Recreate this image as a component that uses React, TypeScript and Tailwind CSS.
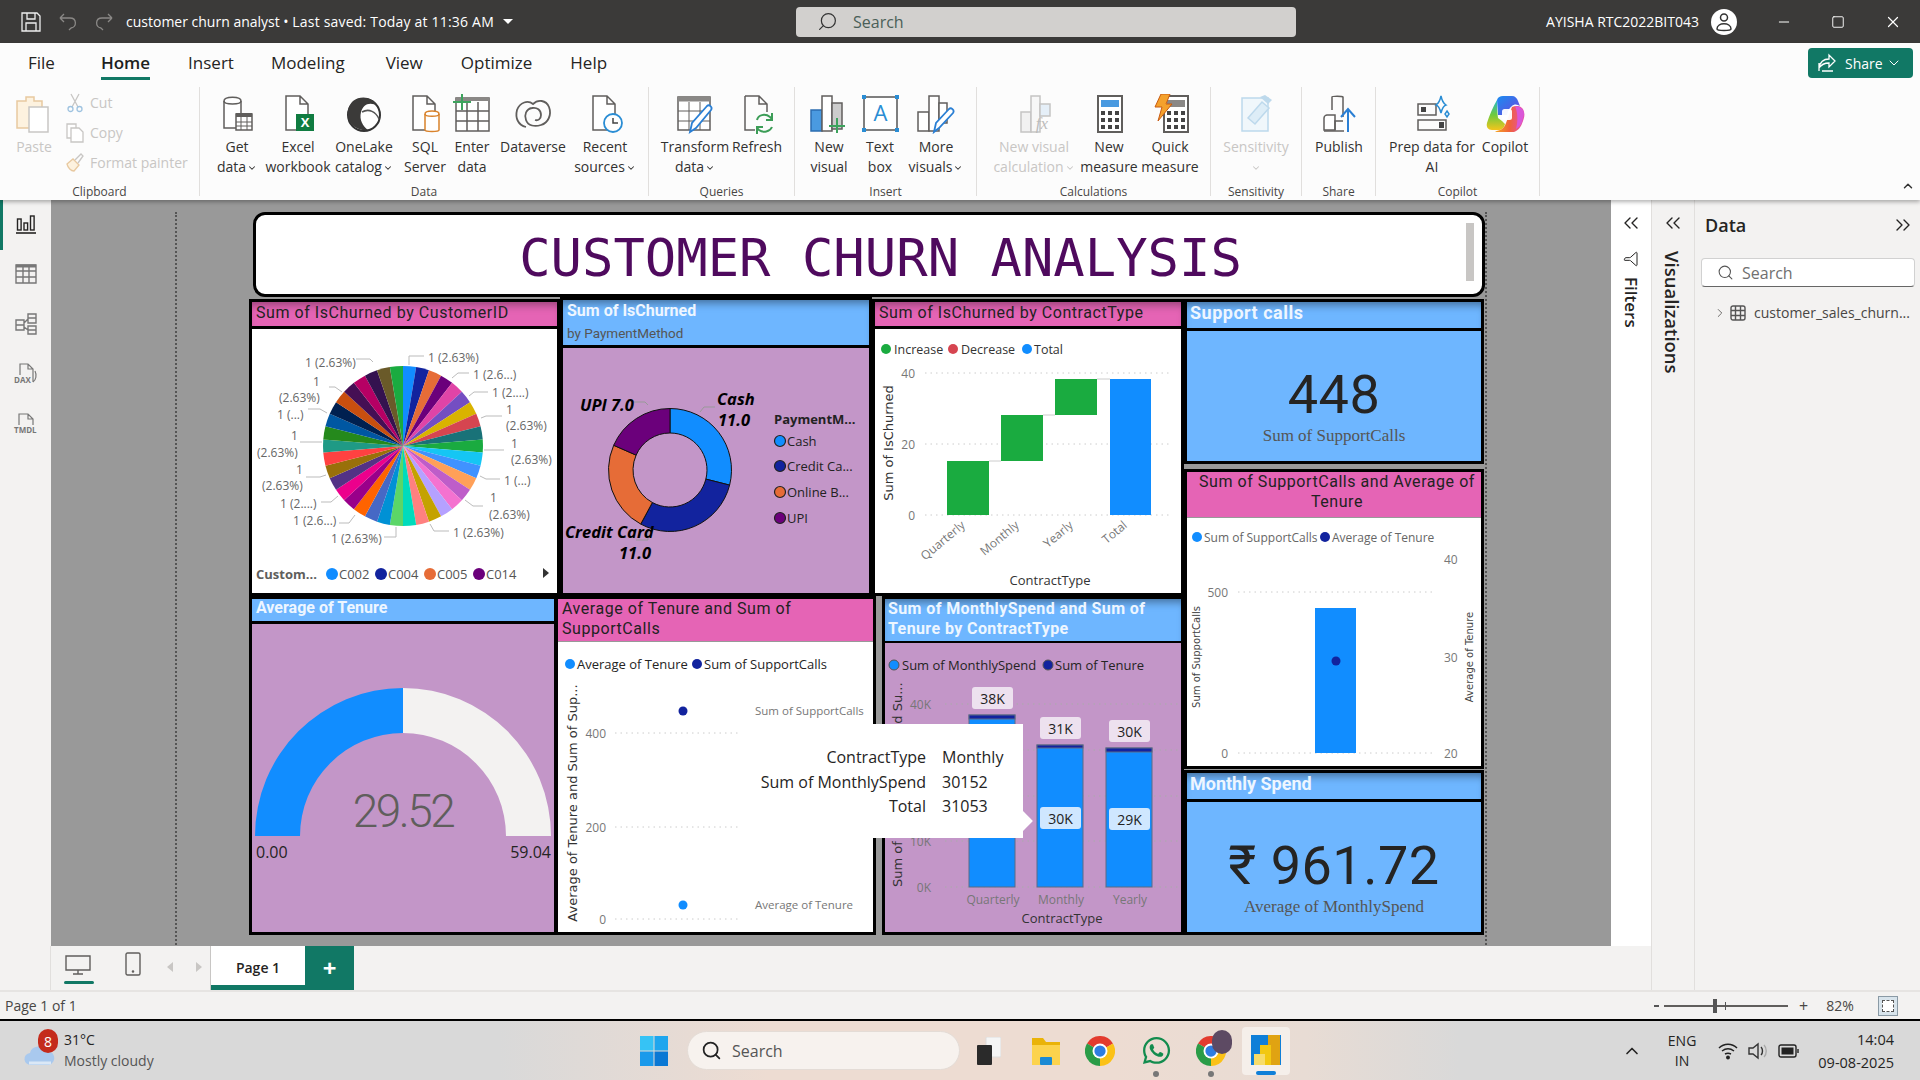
import type { ReactNode } from 'react';
import { ChevronsLeft, ChevronsRight, ChevronRight, ChevronDown, ChevronUp, Search, Funnel, Minus, Square, X } from 'lucide-react';
import { FaWhatsapp } from 'react-icons/fa';

// plain svg text helper, x/y are the middle of the text line
function T({ x, y, c, a, r, children }: { x: number; y: number; c: string; a?: 'start' | 'middle' | 'end'; r?: number; children: ReactNode }) {
  return (
    <text x={x} y={y} className={c} textAnchor={a ?? 'start'} dominantBaseline="central" transform={r ? `rotate(${r} ${x} ${y})` : undefined}>
      {children}
    </text>
  );
}

function sector(cx: number, cy: number, r0: number, r1: number, a0: number, a1: number) {
  const p = (r: number, a: number) => {
    const t = ((a - 90) * Math.PI) / 180;
    return `${(cx + r * Math.cos(t)).toFixed(2)} ${(cy + r * Math.sin(t)).toFixed(2)}`;
  };
  const large = a1 - a0 > 180 ? 1 : 0;
  if (r0 === 0) return `M${cx} ${cy} L${p(r1, a0)} A${r1} ${r1} 0 ${large} 1 ${p(r1, a1)} Z`;
  return `M${p(r1, a0)} A${r1} ${r1} 0 ${large} 1 ${p(r1, a1)} L${p(r0, a1)} A${r0} ${r0} 0 ${large} 0 ${p(r0, a0)} Z`;
}

/* ---------- ribbon icons ---------- */
const G = '#605e5c';
const Ic = ({ children, faded }: { children: ReactNode; faded?: boolean }) => (
  <svg viewBox="0 0 40 40" className={`w-10 h-10 block ${faded ? 'opacity-35' : ''}`} fill="none" stroke={G} strokeWidth="1.5">
    {children}
  </svg>
);
const Doc = () => <path d="M8 2h14l8 8v26H8z M22 2v8h8" fill="#fff" />;

const IconGetData = () => (
  <Ic>
    <path d="M7 7c0-5 17-5 17 0v27H7z" fill="#fff" />
    <path d="M7 7c0 4 17 4 17 0" />
    <rect x="19" y="20" width="16" height="16" fill="#fff" />
    <path d="M19 21h16" strokeWidth="4" />
    <path d="M24 23v13M30 23v13M19 28h16M19 32h16" strokeWidth="1" />
  </Ic>
);
const IconExcel = () => (
  <Ic>
    <Doc />
    <rect x="18" y="20" width="18" height="17" fill="#107c41" stroke="none" />
    <text x="27" y="33" textAnchor="middle" className="fill-white stroke-none text-[13px] font-bold">X</text>
  </Ic>
);
const IconOneLake = () => (
  <Ic>
    <circle cx="20" cy="21" r="16" fill="#fff" stroke="#333" strokeWidth="2" />
    <path d="M9 7c8-6 20-4 25 5-9-5-15-1-17 6-2 8 2 14 7 18-9 1-19-4-20-14C3 16 5 11 9 7z" fill="#3b3a39" stroke="none" />
    <path d="M18 18c7-4 14 0 17 7" stroke="#555" />
  </Ic>
);
const IconSql = () => (
  <Ic>
    <Doc />
    <path d="M20 20c0-4 14-4 14 0v16c0 2-14 2-14 0z" fill="#fff" stroke="#d9822b" />
    <path d="M20 20c0 3 14 3 14 0" stroke="#d9822b" />
  </Ic>
);
const IconEnter = () => (
  <Ic>
    <rect x="4" y="4" width="33" height="33" fill="#fff" />
    <path d="M4 5h33" strokeWidth="4" stroke="#8a8886" />
    <path d="M15 8v29M26 8v29M4 17h33M4 27h33" />
    <path d="M10 0v16M1 8h18" stroke="#3da35d" strokeWidth="2" />
  </Ic>
);
const IconDataverse = () => (
  <Ic>
    <path d="M13 33C5 31 2 24 4 16 7 8 15 6 20 10c5-5 13-4 16 3 3 8-1 16-8 18-6 2-13 1-15-5-2-5 0-11 6-12 5-1 9 2 9 7 0 4-3 6-6 5" strokeWidth="1.8" />
  </Ic>
);
const IconRecent = () => (
  <Ic>
    <Doc />
    <circle cx="28" cy="29" r="9" fill="#fff" stroke="#2a8dd4" strokeWidth="1.8" />
    <path d="M28 24v5h5" stroke="#444" />
  </Ic>
);
const IconTransform = () => (
  <Ic>
    <rect x="3" y="3" width="32" height="33" fill="#fff" />
    <path d="M3 5h32" strokeWidth="5" stroke="#8a8886" />
    <path d="M14 8v28M25 8v28M3 17h32M3 27h32" strokeWidth="1" />
    <path d="M15 38l2-9 15-17c2-2 6 1 4 4L21 34z" fill="#fff" stroke="#2a7fd4" strokeWidth="1.8" />
  </Ic>
);
const IconRefresh = () => (
  <Ic>
    <path d="M8 2h14l8 8v8M8 2v34h10M22 2v8h8" />
    <path d="M20 26c1-5 8-7 13-3l2 2M35 33c-2 5-9 6-13 3l-2-2" stroke="#3c9d57" strokeWidth="2" />
    <path d="M35 19v7h-6M20 40v-7h6" stroke="#3c9d57" strokeWidth="2" />
  </Ic>
);
const IconNewVisual = () => (
  <Ic>
    <rect x="2" y="16" width="11" height="21" fill="#4a9ae0" stroke="#2b6cb0" />
    <rect x="13" y="2" width="10" height="35" fill="#fff" />
    <rect x="23" y="9" width="10" height="26" fill="#ccc" />
    <path d="M28 24v15M20 32h16" stroke="#3da35d" strokeWidth="2" />
  </Ic>
);
const IconTextBox = () => (
  <Ic>
    <rect x="4" y="3" width="33" height="33" fill="#fff" stroke="#555" />
    <text x="20.5" y="27" textAnchor="middle" className="fill-[#2a8dd4] stroke-none text-[22px]">A</text>
    <g fill="#2a8dd4" stroke="none">
      <rect x="2" y="1" width="4" height="4" /><rect x="35" y="1" width="4" height="4" /><rect x="2" y="34" width="4" height="4" /><rect x="35" y="34" width="4" height="4" />
    </g>
  </Ic>
);
const IconMore = () => (
  <Ic>
    <rect x="2" y="18" width="11" height="19" fill="#fff" />
    <rect x="13" y="2" width="10" height="35" fill="#fff" />
    <rect x="23" y="9" width="8" height="20" fill="#fff" />
    <path d="M18 38l2-9 13-14c2-2 6 1 4 4L23 34z" fill="#fff" stroke="#2a7fd4" strokeWidth="1.8" />
  </Ic>
);
const IconCalc = () => (
  <Ic faded>
    <rect x="7" y="18" width="10" height="20" fill="#ddd" />
    <rect x="17" y="2" width="9" height="36" fill="#eee" />
    <rect x="26" y="10" width="10" height="12" fill="#bcd9f2" />
    <text x="28" y="35" textAnchor="middle" className="fill-[#444] stroke-none text-[17px] italic font-['Liberation_Serif',serif]">fx</text>
  </Ic>
);
const Calculator = ({ blue }: { blue?: boolean }) => (
  <>
    <rect x="9" y="2" width="24" height="36" fill="#fff" strokeWidth="2" />
    <rect x="12" y="6" width="18" height="7" fill={blue ? '#4a9ae0' : '#8a8886'} stroke="none" />
    <g fill="#444" stroke="none">
      <rect x="12" y="17" width="4" height="4" /><rect x="19" y="17" width="4" height="4" /><rect x="26" y="17" width="4" height="4" />
      <rect x="12" y="24" width="4" height="4" /><rect x="19" y="24" width="4" height="4" /><rect x="26" y="24" width="4" height="4" />
      <rect x="12" y="31" width="4" height="4" /><rect x="19" y="31" width="4" height="4" /><rect x="26" y="31" width="4" height="4" />
    </g>
  </>
);
const IconMeasure = () => (
  <Ic>
    <Calculator blue />
  </Ic>
);
const IconQuick = () => (
  <Ic>
    <g transform="translate(5 0)">
      <Calculator />
    </g>
    <path d="M11 0h9l-4 10h6L8 27l4-14H5z" fill="#f4a12c" stroke="#c85a11" strokeWidth="1" />
  </Ic>
);
const IconSensitivity = () => (
  <Ic faded>
    <path d="M6 4h26v33H6z" fill="#dbeefb" stroke="#4a9ad0" />
    <path d="M12 24L26 8l7 6-14 16z" fill="#a6d2ee" stroke="#4a9ad0" />
    <path d="M24 3l8 7 4-4-7-5z" fill="#4a9ad0" stroke="none" />
  </Ic>
);
const IconPublish = () => (
  <Ic>
    <path d="M13 16V3c0-1 10-1 11 0v20" />
    <path d="M5 36V24c0-2 2-3 3-3h8v15z" fill="#fff" />
    <path d="M16 36V27h8" />
    <path d="M29 38V15M22 23l7-8 7 8" stroke="#2a7fd4" strokeWidth="2" />
    <path d="M5 37h20" />
  </Ic>
);
const IconPrep = () => (
  <Ic>
    <rect x="6" y="10" width="18" height="11" />
    <rect x="9" y="13" width="5" height="5" fill="#444" stroke="none" />
    <rect x="6" y="26" width="28" height="10" />
    <rect x="27" y="28" width="5" height="6" fill="#444" stroke="none" />
    <path d="M29 2c1 5 2 7 5 9-3 1-4 4-5 8-1-4-2-7-5-8 3-2 4-4 5-9z" stroke="#2a8dd4" />
    <path d="M35 17l2 3-2 3-2-3z" stroke="#2a8dd4" />
  </Ic>
);
const IconCopilot = () => (
  <svg viewBox="0 0 40 40" className="w-10 h-10 block">
    <defs>
      <linearGradient id="cpA" x1="0" y1="0" x2="1" y2="1">
        <stop offset="0" stopColor="#1a8cf0" /><stop offset="0.6" stopColor="#4a63e6" /><stop offset="1" stopColor="#a44fd8" />
      </linearGradient>
      <linearGradient id="cpB" x1="0" y1="0" x2="0" y2="1">
        <stop offset="0" stopColor="#26b8c8" /><stop offset="0.5" stopColor="#6fca3c" /><stop offset="1" stopColor="#f4c51c" />
      </linearGradient>
      <linearGradient id="cpC" x1="0" y1="0" x2="1" y2="0">
        <stop offset="0" stopColor="#f5a623" /><stop offset="0.5" stopColor="#f0623a" /><stop offset="1" stopColor="#e64fb4" />
      </linearGradient>
    </defs>
    <path d="M12 6c1-3 3-4 6-4h9c3 0 5 2 6 5l2 5c-3-2-6-2-8 0-3 2-4 5-5 9H13z" fill="url(#cpA)" />
    <path d="M12 6C8 13 4 22 2 29c-1 4 1 7 5 7h6c4 0 6-2 7-6l-3-3-4-3c-1-6-1-13-1-18z" fill="url(#cpB)" />
    <path d="M27 13c5-2 11-1 12 5 1 3 0 6-1 9-2 6-4 9-9 11H14c-2 0-3 0-4-1 5 0 9-2 11-8z" fill="url(#cpC)" />
    <path d="M30 12c5 0 9 3 9 8l-2 8c-1 3-3 5-6 7 2-7 2-16-1-23z" fill="#d957d8" />
    <rect x="17" y="15" width="10" height="11" rx="2.5" fill="#fff" opacity="0.95" />
  </svg>
);

/* ---------- ribbon ---------- */
function Btn({ w, icon, l1, l2, caret, faded }: { w: string; icon: ReactNode; l1: string; l2?: string; caret?: boolean; faded?: boolean }) {
  return (
    <div className={`${w} shrink-0 flex flex-col items-center pt-[7px] text-[14px] leading-[20px] whitespace-nowrap ${faded ? 'text-[#c8c6c4]' : 'text-[#323130]'}`}>
      <div className="h-10 w-10 mb-[3px]">{icon}</div>
      <span>{l1}</span>
      <span className="flex items-center gap-px h-5">
        {l2}
        {caret && <ChevronDown className="w-[10px] h-[10px] mt-[2px]" strokeWidth={2.5} />}
      </span>
    </div>
  );
}

function Group({ w, label, pad, children }: { w: string; label: string; pad?: string; children: ReactNode }) {
  return (
    <div className={`${w} shrink-0 h-full flex flex-col border-r border-[#e1dfdd]`}>
      <div className={`flex-1 flex ${pad ?? ''}`}>{children}</div>
      <div className="h-[16px] -mb-[4px] text-center text-[12px] leading-[16px] text-[#484644]">{label}</div>
    </div>
  );
}

function Ribbon() {
  return (
    <div className="relative z-10 h-[157px] bg-[#fcfcfc] shadow-[0_2px_4px_rgba(0,0,0,0.3)]">
      <div className="h-[44px] flex items-start relative text-[17px] text-[#252423]">
        <span className="ml-[28px] mt-[7px]">File</span>
        <span className="ml-[46px] h-[37px] pt-[7px] border-b-[3px] border-[#117865] font-semibold text-[#201f1e]">Home</span>
        <span className="ml-[38px] mt-[7px]">Insert</span>
        <span className="ml-[37px] mt-[7px]">Modeling</span>
        <span className="ml-[41px] mt-[7px]">View</span>
        <span className="ml-[38px] mt-[7px]">Optimize</span>
        <span className="ml-[38px] mt-[7px]">Help</span>
        <div className="absolute left-[1808px] top-[5px] w-[105px] h-[30px] rounded bg-[#117865] text-white text-[14px] flex items-center pl-[8px] gap-[9px]">
          <svg viewBox="0 0 20 20" className="w-5 h-5" fill="none" stroke="#fff" strokeWidth="1.3">
            <path d="M6 18h11M3 18v-8M3 15c1-6 5-9 10-9V2l6 6-6 6v-4c-5 0-8 2-10 5z" />
          </svg>
          Share
          <ChevronDown className="w-4 h-4 -ml-[6px]" strokeWidth={1.5} />
        </div>
      </div>
      <div className="h-[109px] flex">
        <Group w="w-[200px]" label="Clipboard">
          <div className="w-[68px] pt-[7px] flex flex-col items-center text-[14px] leading-[20px] text-[#c8c6c4]">
            <svg viewBox="0 0 40 40" className="w-10 h-10 mb-[3px]" fill="none">
              <path d="M3 7h9V3h8v4h8v27H3z" fill="#fdf2df" stroke="#e8c9a0" strokeWidth="1.5" />
              <rect x="15" y="13" width="19" height="25" fill="#fff" stroke="#c8c6c4" strokeWidth="1.5" />
            </svg>
            Paste
          </div>
          <div className="flex flex-col text-[14px] text-[#c8c6c4] leading-[30px] pt-[1px] -ml-[2px]">
            <span className="flex items-center gap-[6px]">
              <svg viewBox="0 0 18 20" className="w-[18px] h-[20px]" fill="none" stroke="#c8c6c4" strokeWidth="1.3">
                <path d="M5 1l7 13M13 1L6 14" /><circle cx="4.5" cy="16" r="2.5" stroke="#9fc3e0" /><circle cx="13.5" cy="16" r="2.5" stroke="#9fc3e0" />
              </svg>
              Cut
            </span>
            <span className="flex items-center gap-[6px]">
              <svg viewBox="0 0 18 20" className="w-[18px] h-[20px]" fill="#fff" stroke="#c8c6c4" strokeWidth="1.3">
                <path d="M1 1h9v14H1z" /><path d="M5 5h8l4 4v10H5z" />
              </svg>
              Copy
            </span>
            <span className="flex items-center gap-[6px] whitespace-nowrap">
              <svg viewBox="0 0 18 20" className="w-[18px] h-[20px]" fill="none" stroke="#e8c9a0" strokeWidth="1.3">
                <path d="M1 11l6-5 6 6-5 6c-3 0-6-3-7-7z" fill="#fdf2df" /><path d="M9 7l6-6 2 2-5 7" stroke="#c8c6c4" />
              </svg>
              Format painter
            </span>
          </div>
        </Group>
        <Group w="w-[449px]" label="Data" pad="pl-[6px]">
          <Btn w="w-[62px]" icon={<IconGetData />} l1="Get" l2="data" caret />
          <Btn w="w-[60px]" icon={<IconExcel />} l1="Excel" l2="workbook" />
          <Btn w="w-[72px]" icon={<IconOneLake />} l1="OneLake" l2="catalog" caret />
          <Btn w="w-[50px]" icon={<IconSql />} l1="SQL" l2="Server" />
          <Btn w="w-[44px]" icon={<IconEnter />} l1="Enter" l2="data" />
          <Btn w="w-[78px]" icon={<IconDataverse />} l1="Dataverse" />
          <Btn w="w-[66px]" icon={<IconRecent />} l1="Recent" l2="sources" caret />
        </Group>
        <Group w="w-[146px]" label="Queries" pad="pl-[4px]">
          <Btn w="w-[84px]" icon={<IconTransform />} l1="Transform" l2="data" caret />
          <Btn w="w-[40px]" icon={<IconRefresh />} l1="Refresh" />
        </Group>
        <Group w="w-[182px]" label="Insert" pad="pl-[5px]">
          <Btn w="w-[58px]" icon={<IconNewVisual />} l1="New" l2="visual" />
          <Btn w="w-[44px]" icon={<IconTextBox />} l1="Text" l2="box" />
          <Btn w="w-[68px]" icon={<IconMore />} l1="More" l2="visuals" caret />
        </Group>
        <Group w="w-[234px]" label="Calculations" pad="pl-[7px]">
          <Btn w="w-[100px]" icon={<IconCalc />} l1="New visual" l2="calculation" caret faded />
          <Btn w="w-[50px]" icon={<IconMeasure />} l1="New" l2="measure" />
          <Btn w="w-[72px]" icon={<IconQuick />} l1="Quick" l2="measure" />
        </Group>
        <Group w="w-[91px]" label="Sensitivity">
          <Btn w="w-[90px]" icon={<IconSensitivity />} l1="Sensitivity" caret faded />
        </Group>
        <Group w="w-[74px]" label="Share">
          <Btn w="w-[74px]" icon={<IconPublish />} l1="Publish" />
        </Group>
        <Group w="w-[164px]" label="Copilot" pad="pl-[8px]">
          <Btn w="w-[96px]" icon={<IconPrep />} l1="Prep data for" l2="AI" />
          <Btn w="w-[50px]" icon={<IconCopilot />} l1="Copilot" />
        </Group>
        <div className="flex-1 flex justify-end items-end pr-[5px] pb-[3px]">
          <ChevronUp className="w-[14px] h-[14px] text-[#333]" strokeWidth={2.5} />
        </div>
      </div>
    </div>
  );
}

/* ---------- report visuals ---------- */
const PINK = 'bg-[#e564b5] text-[#222] font-["Roboto",sans-serif] text-[16px] tracking-[0.55px]';
const PINK_SHADE = `${PINK} shadow-[inset_0_8px_8px_-5px_rgba(0,0,0,0.35)]`;
const BLUE_FLAT = 'bg-[#6eb6ff] text-[#eef6ff] font-["Roboto",sans-serif] font-bold text-[16px]';
const BLUE = `${BLUE_FLAT} shadow-[inset_0_8px_8px_-5px_rgba(0,0,0,0.4)]`;
const PLUM = 'bg-[#c396c8]';

function Visual({ size, head, headClass, body, children }: { size: string; head: ReactNode; headClass: string; body: string; children: ReactNode }) {
  return (
    <section className={`${size} shrink-0 flex flex-col border-[3px] border-black`}>
      <div className={headClass}>{head}</div>
      <div className={`flex-1 min-h-0 ${body}`}>{children}</div>
    </section>
  );
}

const SLICES = ['#118DFF', '#12239E', '#E66C37', '#6B007B', '#E044A7', '#744EC2', '#D9B300', '#D64550', '#197278', '#1AAB40', '#15C6F4', '#4092FF', '#FFA058', '#BE5DC9', '#F472D0', '#B5A1FF', '#C4A200', '#FF8080', '#00DBBC', '#5BD667', '#0091D5', '#4668C5', '#FF6300', '#99008A', '#EC008C', '#533285', '#99700A', '#FF4141', '#1F9A85', '#25891C', '#0057A2', '#002050', '#C94F0F', '#450F54', '#B60064', '#34124F', '#6A5A29', '#1AAB40'];

const LBL = 'fill-[#666] text-[12px]';
const PIE_TEXT: [number, number, string][] = [
  [428, 357, '1 (2.63%)'], [473, 374, '1 (2.6...)'], [492, 392, '1 (2....)'], [506, 409, '1'], [506, 425, '(2.63%)'],
  [511, 443, '1'], [511, 459, '(2.63%)'], [504, 480, '1 (...)'], [490, 497, '1'], [489, 514, '(2.63%)'],
  [453, 532, '1 (2.63%)'], [331, 538, '1 (2.63%)'], [293, 520, '1 (2.6...)'], [280, 503, '1 (2....)'], [296, 469, '1'], [262, 485, '(2.63%)'],
  [291, 435, '1'], [257, 452, '(2.63%)'], [277, 414, '1 (...)'], [313, 381, '1'], [279, 397, '(2.63%)'], [305, 362, '1 (2.63%)'],
];
const PIE_LEADERS = [
  'M409 365v-9h15', 'M452 378l6-5h11', 'M469 396l5-4h14', 'M481 418l5-2h16', 'M484 450h20', 'M480 476l6 3h14', 'M465 500l8 6h10',
  'M430 524l4 7h15', 'M396 527v10h-12', 'M355 515l-6 8h-10', 'M338 496l-7 6h-10', 'M326 475l-6 2h-14', 'M322 442h-22', 'M327 413l-7-4h-12', 'M342 392l-7-5h-6', 'M373 362l-3-3h-14',
];

function PieChart() {
  const step = 360 / SLICES.length;
  return (
    <svg viewBox="252 329 305 264" className="block w-full h-full">
      {SLICES.map((c, i) => (
        <path key={i} d={sector(403, 446, 0, 80, i * step, (i + 1) * step)} fill={c} />
      ))}
      <g fill="none" stroke="#bbb" strokeWidth="1">
        {PIE_LEADERS.map((d) => (
          <path key={d} d={d} />
        ))}
      </g>
      {PIE_TEXT.map(([x, y, s], i) => (
        <T key={i} x={x} y={y} c={LBL}>{s}</T>
      ))}
      <T x={256} y={574} c="fill-[#605e5c] text-[13px] font-bold">Custom...</T>
      {[['C002', 332, '#118DFF'], ['C004', 381, '#12239E'], ['C005', 430, '#E66C37'], ['C014', 479, '#6B007B']].map(([s, x, c]) => (
        <g key={s as string}>
          <circle cx={x as number} cy={574} r={6} fill={c as string} />
          <T x={(x as number) + 7} y={574} c="fill-[#555] text-[13px]">{s}</T>
        </g>
      ))}
      <path d="M543 568l6 5-6 5z" fill="#333" />
    </svg>
  );
}

function DonutChart() {
  const vals = [['#118DFF', 11], ['#12239E', 11], ['#E66C37', 9], ['#6B007B', 7]] as const;
  let at = 0;
  const B = 'fill-black text-[16.5px] font-bold italic';
  return (
    <svg viewBox="563 348 306 245" className="block w-full h-full">
      {vals.map(([c, v]) => {
        const a0 = at;
        at += (v / 38) * 360;
        return <path key={c} d={sector(670, 470, 37, 61.5, a0, at)} fill={c} stroke="#111" strokeWidth="1" />;
      })}
      <path d="M648 405l-3-3h-11M700 412l4-5h11M648 530v10h-12" fill="none" stroke="#999" />
      <T x={580} y={404} c={B}>UPI 7.0</T>
      <T x={717} y={398} c={B}>Cash</T>
      <T x={718} y={419} c={B}>11.0</T>
      <T x={565} y={531} c={B}>Credit Card</T>
      <T x={619} y={552} c={B}>11.0</T>
      <T x={774} y={419} c="fill-[#222] text-[13px] font-bold">PaymentM...</T>
      {[['Cash', 441, '#118DFF'], ['Credit Ca...', 466, '#12239E'], ['Online B...', 492, '#E66C37'], ['UPI', 518, '#6B007B']].map(([s, y, c]) => (
        <g key={s as string}>
          <circle cx={780} cy={y as number} r={5.5} fill={c as string} stroke="#222" strokeWidth="1.2" />
          <T x={787} y={y as number} c="fill-[#222] text-[13px]">{s}</T>
        </g>
      ))}
    </svg>
  );
}

const GRID = { stroke: '#ccc', strokeDasharray: '1.5 4', strokeWidth: 1 };
const AX = "fill-[#333] text-[13px] font-['DejaVu_Sans',sans-serif]";

function Waterfall() {
  return (
    <svg viewBox="875 329 306 264" className="block w-full h-full">
      {[['40', 373], ['20', 444], ['0', 515]].map(([s, y]) => (
        <g key={s as string}>
          <line x1={925} x2={1172} y1={y as number} y2={y as number} {...GRID} />
          <T x={915} y={y as number} a="end" c="fill-[#777] text-[12px]">{s}</T>
        </g>
      ))}
      <path d="M989 461h12M1043 415h12M1097 379h13" stroke="#ccc" />
      <rect x={947} y={461} width={42} height={54} fill="#1aab40" />
      <rect x={1001} y={415} width={42} height={46} fill="#1aab40" />
      <rect x={1055} y={379} width={42} height={36} fill="#1aab40" />
      <rect x={1110} y={379} width={41} height={136} fill="#118dff" />
      {[['#1aab40', 886, 'Increase', 894], ['#d64550', 953, 'Decrease', 961], ['#118dff', 1027, 'Total', 1034]].map(([c, x, s, tx]) => (
        <g key={s as string}>
          <circle cx={x as number} cy={349} r={5} fill={c as string} />
          <T x={tx as number} y={349} c="fill-[#333] text-[12.5px]">{s}</T>
        </g>
      ))}
      <T x={888} y={443} a="middle" r={-90} c={AX}>Sum of IsChurned</T>
      <T x={963} y={523} a="end" r={-40} c="fill-[#777] text-[12px]">Quarterly</T>
      <T x={1017} y={523} a="end" r={-40} c="fill-[#777] text-[12px]">Monthly</T>
      <T x={1071} y={523} a="end" r={-40} c="fill-[#777] text-[12px]">Yearly</T>
      <T x={1125} y={523} a="end" r={-40} c="fill-[#777] text-[12px]">Total</T>
      <T x={1050} y={580} a="middle" c="fill-[#333] text-[13px] font-medium">ContractType</T>
    </svg>
  );
}

function ComboSingle() {
  return (
    <svg viewBox="1187 518 294 248" className="block w-full h-full">
      <circle cx={1197} cy={537} r={5} fill="#118dff" />
      <T x={1204} y={537} c="fill-[#666] text-[12px]">Sum of SupportCalls</T>
      <circle cx={1325} cy={537} r={5} fill="#12239e" />
      <T x={1332} y={537} c="fill-[#666] text-[12px]">Average of Tenure</T>
      <line x1={1238} x2={1435} y1={592} y2={592} {...GRID} />
      <line x1={1238} x2={1435} y1={753} y2={753} {...GRID} />
      <T x={1228} y={592} a="end" c="fill-[#777] text-[12px]">500</T>
      <T x={1228} y={753} a="end" c="fill-[#777] text-[12px]">0</T>
      <T x={1444} y={559} c="fill-[#777] text-[12px]">40</T>
      <T x={1444} y={657} c="fill-[#777] text-[12px]">30</T>
      <T x={1444} y={753} c="fill-[#777] text-[12px]">20</T>
      <rect x={1315} y={608} width={41} height={145} fill="#118dff" />
      <circle cx={1336} cy={661} r={4.5} fill="#12239e" />
      <T x={1196} y={657} a="middle" r={-90} c="fill-[#444] text-[10px] font-['DejaVu_Sans',sans-serif]">Sum of SupportCalls</T>
      <T x={1469} y={657} a="middle" r={-90} c="fill-[#444] text-[10px] font-['DejaVu_Sans',sans-serif]">Average of Tenure</T>
    </svg>
  );
}

function Gauge() {
  return (
    <svg viewBox="252 624 302 308" className="block w-full h-full">
      <path d={sector(403, 836, 103, 148, -90, 0)} fill="#118dff" />
      <path d={sector(403, 836, 103, 148, 0, 90)} fill="#f3f2f1" />
      <T x={403} y={811} a="middle" c="fill-[#605e5c] text-[46px] font-light font-['Roboto',sans-serif] tracking-[-2.5px]">29.52</T>
      <T x={256} y={852} c="fill-[#252423] text-[16px]">0.00</T>
      <T x={551} y={852} a="end" c="fill-[#252423] text-[16px]">59.04</T>
    </svg>
  );
}

function Scatter() {
  return (
    <svg viewBox="558 642 315 290" className="block w-full h-full">
      <circle cx={570} cy={664} r={5} fill="#118dff" />
      <T x={577} y={664} c="fill-[#252423] text-[13px]">Average of Tenure</T>
      <circle cx={697} cy={664} r={5} fill="#12239e" />
      <T x={704} y={664} c="fill-[#252423] text-[13px]">Sum of SupportCalls</T>
      {[['400', 733], ['200', 827], ['0', 919]].map(([s, y]) => (
        <g key={s as string}>
          <line x1={615} x2={738} y1={y as number} y2={y as number} {...GRID} />
          <T x={606} y={y as number} a="end" c="fill-[#777] text-[12px]">{s}</T>
        </g>
      ))}
      <circle cx={683} cy={711} r={4.5} fill="#12239e" />
      <circle cx={683} cy={905} r={4.5} fill="#118dff" />
      <T x={755} y={710} c="fill-[#777] text-[11.5px]">Sum of SupportCalls</T>
      <T x={755} y={904} c="fill-[#777] text-[11.5px]">Average of Tenure</T>
      <T x={572} y={803} a="middle" r={-90} c={AX}>Average of Tenure and Sum of Sup...</T>
    </svg>
  );
}

function Stacked() {
  const bars = [
    { x: 969, top: 715, mid: 719, l1: '38K', y1: 687, l2: null, y2: 0, name: 'Quarterly' },
    { x: 1037, top: 745, mid: 748, l1: '31K', y1: 717, l2: '30K', y2: 807, name: 'Monthly' },
    { x: 1106, top: 748, mid: 752, l1: '30K', y1: 720, l2: '29K', y2: 808, name: 'Yearly' },
  ];
  return (
    <svg viewBox="885 643 296 289" className="block w-full h-full">
      <circle cx={894} cy={665} r={5} fill="#118dff" stroke="#555" />
      <T x={902} y={665} c="fill-[#252423] text-[13px]">Sum of MonthlySpend</T>
      <circle cx={1048} cy={665} r={5} fill="#12239e" stroke="#555" />
      <T x={1055} y={665} c="fill-[#252423] text-[13px]">Sum of Tenure</T>
      {[['40K', 704], ['30K', 750], ['20K', 796], ['10K', 841], ['0K', 887]].map(([s, y]) => (
        <g key={s as string}>
          <line x1={945} x2={1178} y1={y as number} y2={y as number} stroke="#aaa" strokeDasharray="1.5 4" />
          <T x={931} y={y as number} a="end" c="fill-[#777] text-[12px]">{s}</T>
        </g>
      ))}
      {bars.map((b) => (
        <g key={b.name}>
          <rect x={b.x} y={b.top} width={46} height={887 - b.top} fill="#118dff" stroke="#5c6a85" />
          <rect x={b.x} y={b.top} width={46} height={b.mid - b.top} fill="#12239e" stroke="#5c6a85" />
          <rect x={b.x + 3} y={b.y1} width={41} height={22} rx={3} fill="#ede1ef" />
          <T x={b.x + 23.5} y={b.y1 + 11} a="middle" c="fill-[#222] text-[14px]">{b.l1}</T>
          {b.l2 && (
            <>
              <rect x={b.x + 3} y={b.y2} width={41} height={22} rx={3} fill="#cfe7ff" />
              <T x={b.x + 23.5} y={b.y2 + 11} a="middle" c="fill-[#222] text-[14px]">{b.l2}</T>
            </>
          )}
          <T x={b.x + 24} y={899} a="middle" c="fill-[#777] text-[12px]">{b.name}</T>
        </g>
      ))}
      <T x={1062} y={918} a="middle" c="fill-[#333] text-[13px] font-medium">ContractType</T>
      <T x={897} y={887} r={-90} c={AX}>Sum of MonthlySpend and Su...</T>
    </svg>
  );
}

function Card({ value, label }: { value: string; label: string }) {
  return (
    <div className="h-full bg-[#6eb6ff] flex flex-col items-center pt-[32px]">
      <div className="text-[54px] leading-[64px] text-[#252423] font-['Roboto',sans-serif] tracking-[0.5px]">{value}</div>
      <div className="text-[17px] leading-[24px] text-[#555] font-['Liberation_Serif',serif] -mt-[3px]">{label}</div>
    </div>
  );
}

function Report() {
  return (
    <div className="h-[737px] w-[1312px] ml-[124px] border-x-2 border-b-2 border-dotted border-[#555] pl-[72px]">
      <div className="mt-[12px] ml-[4px] w-[1232px] h-[85px] border-[3px] border-black rounded-xl bg-white flex items-center justify-center relative text-[52.2px] text-[#4f0a5e] font-['DejaVu_Sans_Mono',monospace] pl-[23px] pt-[7px]">
        CUSTOMER CHURN ANALYSIS
        <div className="absolute right-[8px] top-[8px] w-[8px] h-[58px] bg-[#c8c6c4]" />
      </div>
      <div className="mt-[2px] flex relative">
        <div className="w-[935px] shrink-0">
          <div className="flex h-[297px]">
            <Visual size="w-[311px] h-[297px]" head="Sum of IsChurned by CustomerID" headClass={`h-[27px] border-b-[3px] border-black pl-[4px] leading-[22px] ${PINK_SHADE}`} body="bg-white">
              <PieChart />
            </Visual>
            <Visual
              size="w-[312px] h-[299px] -mt-[2px]"
              head={
                <>
                  <div className="h-[24px] pl-[4px] leading-[22px]">Sum of IsChurned</div>
                  <div className="text-[13.5px] pl-[4px] leading-[18px] font-normal text-[#555]">by PaymentMethod</div>
                </>
              }
              headClass={`h-[48px] border-b-[3px] border-black ${BLUE}`}
              body={PLUM}
            >
              <DonutChart />
            </Visual>
            <Visual size="w-[312px] h-[297px]" head="Sum of IsChurned by ContractType" headClass={`h-[27px] border-b-[3px] border-black pl-[4px] leading-[22px] ${PINK_SHADE}`} body="bg-white">
              <Waterfall />
            </Visual>
          </div>
          <div className="flex h-[339px]">
            <Visual size="w-[308px] h-[339px]" head="Average of Tenure" headClass={`h-[25px] border-b-[3px] border-black pl-[4px] leading-[17px] ${BLUE_FLAT}`} body={PLUM}>
              <Gauge />
            </Visual>
            <Visual size="w-[321px] h-[339px] -ml-[2px]" head="Average of Tenure and Sum of SupportCalls" headClass={`h-[43px] border-b border-[#999] pl-[4px] pr-[12px] leading-[20px] ${PINK}`} body="bg-white">
              <Scatter />
            </Visual>
            <Visual size="w-[302px] h-[339px] ml-[6px]" head="Sum of MonthlySpend and Sum of Tenure by ContractType" headClass={`h-[44px] border-b-2 border-black pl-[3px] pr-[30px] leading-[20px] tracking-[0.4px] ${BLUE}`} body={PLUM}>
              <Stacked />
            </Visual>
          </div>
        </div>
        <div className="w-[300px] shrink-0">
          <Visual size="w-[300px] h-[165px]" head="Support calls" headClass={`h-[29px] border-b-[3px] border-black pl-[3px] leading-[22px] ${BLUE} text-[18px] tracking-[0.5px]`} body="">
            <Card value="448" label="Sum of SupportCalls" />
          </Visual>
          <div className="mt-[5px]">
            <Visual size="w-[300px] h-[300px]" head="Sum of SupportCalls and Average of Tenure" headClass={`h-[46px] border-b border-[#999] pl-[10px] pr-[4px] leading-[20px] text-center ${PINK}`} body="bg-white">
              <ComboSingle />
            </Visual>
          </div>
          <div className="mt-[1px]">
            <Visual size="w-[300px] h-[165px]" head="Monthly Spend" headClass={`h-[29px] border-b-[3px] border-black pl-[3px] leading-[22px] ${BLUE} text-[18px]`} body="">
              <Card value="₹ 961.72" label="Average of MonthlySpend" />
            </Visual>
          </div>
        </div>
        {/* hover tooltip over the charts */}
        <div className="absolute left-[491px] top-[425px] w-[283px] h-[114px] bg-white text-[16px] text-[#252423] pt-[21px]">
          <div className="grid grid-cols-[186px_auto] gap-x-4 leading-[24.5px]">
            <span className="text-right">ContractType</span><span>Monthly</span>
            <span className="text-right">Sum of MonthlySpend</span><span>30152</span>
            <span className="text-right">Total</span><span>31053</span>
          </div>
          <div className="absolute -right-[7px] top-[90px] w-[14px] h-[14px] rotate-45 bg-white" />
        </div>
      </div>
    </div>
  );
}

/* ---------- side rail ---------- */
function Rail() {
  const s = 'w-[22px] h-[22px] block';
  return (
    <div className="w-[51px] shrink-0 bg-[#f3f2f1] relative flex flex-col items-center pt-[13px] gap-[28px]">
      <div className="absolute left-0 top-0 w-[3px] h-[50px] bg-[#117865]" />
      <svg viewBox="0 0 22 22" className={s} fill="none" stroke="#252423" strokeWidth="1.4">
        <rect x="2.5" y="6" width="3.6" height="11" /><rect x="9" y="10" width="3.6" height="7" /><rect x="15.5" y="3" width="3.6" height="14" />
        <path d="M1 20h20" strokeWidth="1.6" />
      </svg>
      <svg viewBox="0 0 22 22" className={s} fill="none" stroke="#777" strokeWidth="1.4">
        <path d="M1 2h20v18H1zM1 8h20M1 14h20M8 3v17M14 3v17" />
        <path d="M1 3h20" strokeWidth="3" />
      </svg>
      <svg viewBox="0 0 22 22" className={s} fill="none" stroke="#777" strokeWidth="1.4">
        <path d="M1 7h8v10H1zM13 1h8v9h-8zM13 13h8v8h-8zM1 12h8M13 5h8M13 17h8M9 10l4-4M9 14l4 3" />
      </svg>
      <svg viewBox="0 0 24 22" className="w-[24px] h-[22px] block" fill="none" stroke="#777" strokeWidth="1.2">
        <path d="M6 12V1h8l5 5v13M14 1v5h5M21 8c2 4 1 9-2 11" />
        <text x="0" y="20" className="fill-[#777] stroke-none text-[8px] font-bold">DAX</text>
      </svg>
      <svg viewBox="0 0 26 22" className="w-[26px] h-[22px] block" fill="none" stroke="#777" strokeWidth="1.2">
        <path d="M6 12V1h9l5 5v6M15 1v5h5" />
        <text x="1" y="20" className="fill-[#777] stroke-none text-[8px] font-bold">TMDL</text>
      </svg>
    </div>
  );
}

function Panes() {
  return (
    <>
      <div className="w-[41px] shrink-0 bg-white border-r border-[#e1dfdd] flex flex-col items-center pt-[11px] text-[#252423]">
        <ChevronsLeft className="w-[24px] h-[24px]" strokeWidth={1.4} />
        <Funnel className="w-[16px] h-[16px] mt-[16px] rotate-90" strokeWidth={1.5} />
        <span className="[writing-mode:vertical-rl] text-[17px] font-semibold mt-[10px] leading-none">Filters</span>
      </div>
      <div className="w-[43px] shrink-0 bg-[#f3f2f1] border-r border-[#e1dfdd] flex flex-col items-center pt-[11px] text-[#252423]">
        <ChevronsLeft className="w-[24px] h-[24px]" strokeWidth={1.4} />
        <span className="[writing-mode:vertical-rl] text-[18.5px] font-semibold mt-[16px] leading-none -ml-[3px]">Visualizations</span>
      </div>
      <div className="flex-1 bg-[#f3f2f1] pt-[13px]">
        <div className="flex items-center justify-between pl-[10px] pr-[6px] h-[24px] text-[#252423]">
          <span className="text-[18px] font-semibold">Data</span>
          <ChevronsRight className="w-[24px] h-[24px]" strokeWidth={1.4} />
        </div>
        <div className="mt-[21px] mx-[6px] w-[214px] h-[29px] bg-white rounded border border-[#d1d1d1] border-b-[#666] flex items-center pl-[15px] gap-[8px] text-[16px] text-[#707070]">
          <Search className="w-[17px] h-[17px] text-[#555]" strokeWidth={1.5} />
          Search
        </div>
        <div className="mt-[15px] pl-[18px] flex items-center text-[14px] text-[#484644] whitespace-nowrap">
          <ChevronRight className="w-[14px] h-[14px]" strokeWidth={1.3} />
          <svg viewBox="0 0 16 16" className="w-4 h-4 ml-[3px] mr-[8px]" fill="none" stroke="#555" strokeWidth="1.4">
            <rect x="1" y="1" width="14" height="14" rx="2" /><path d="M1 5.5h14M1 10.5h14M5.5 1v14M10.5 1v14" />
          </svg>
          customer_sales_churn...
        </div>
      </div>
    </>
  );
}

/* ---------- taskbar bits ---------- */
function Chrome({ cls }: { cls: string }) {
  return (
    <svg viewBox="0 0 32 32" className={cls}>
      <path d={sector(16, 16, 0, 16, -60, 60)} fill="#e33b2e" />
      <path d={sector(16, 16, 0, 16, 60, 180)} fill="#fbc116" />
      <path d={sector(16, 16, 0, 16, 180, 300)} fill="#2a9c47" />
      <circle cx="16" cy="16" r="8" fill="#fff" />
      <circle cx="16" cy="16" r="6" fill="#2f7de1" />
    </svg>
  );
}

function TaskBar() {
  return (
    <div className="h-[61px] border-t-2 border-black bg-[linear-gradient(90deg,#d9d9d9_0%,#d9d9d9_26%,#eddcd2_40%,#eddcd2_58%,#e8dcd4_68%,#d9d9d9_76%,#d9d9d9_100%)] flex items-center relative text-[#252423]">
      <div className="w-[64px] h-full relative shrink-0">
        <svg viewBox="0 0 32 22" className="absolute left-[24px] top-[24px] w-[32px] h-[22px]">
          <path d="M7 20a6 6 0 0 1-1-12 8 8 0 0 1 15-2 7 7 0 0 1 4 14z" fill="#a9c9ee" />
          <path d="M5 18h22" stroke="#dbe8f6" strokeWidth="3" />
        </svg>
        <div className="absolute left-[38px] top-[8px] w-[20px] h-[24px] rounded-full bg-[#c42b1c] text-white text-[14px] flex items-center justify-center">8</div>
      </div>
      <div className="w-[576px] shrink-0 text-[14px] leading-[21px] pb-[1px]">
        <div>31°C</div>
        <div className="text-[#555]">Mostly cloudy</div>
      </div>
      <svg viewBox="0 0 28 30" className="w-[28px] h-[30px] shrink-0 mt-[1px]">
        <rect x="0" y="0" width="13.5" height="14.5" fill="#36c3f5" />
        <rect x="14.5" y="0" width="13.5" height="14.5" fill="#1fa6ee" />
        <rect x="0" y="15.5" width="13.5" height="14.5" fill="#1a9aeb" />
        <rect x="14.5" y="15.5" width="13.5" height="14.5" fill="#0a78d4" />
      </svg>
      <div className="ml-[19px] w-[273px] h-[39px] rounded-full bg-[#f7f2ee] border border-[#e4dcd6] flex items-center pl-[13px] gap-[10px] text-[16px] text-[#555]">
        <Search className="w-[21px] h-[21px] text-[#222]" strokeWidth={2} />
        Search
      </div>
      <svg viewBox="0 0 24 28" className="ml-[17px] w-[24px] h-[28px] shrink-0">
        <rect x="9" y="0" width="15" height="20" rx="1" fill="#f5f5f5" stroke="#ddd" />
        <rect x="0" y="8" width="15" height="20" rx="1" fill="#2a2a2a" />
      </svg>
      <svg viewBox="0 0 30 30" className="ml-[30px] w-[30px] h-[30px] shrink-0">
        <path d="M1 2h11l3 4h14v23H1z" fill="#eab308" />
        <path d="M1 9h28v20H1z" fill="#fcd34d" />
        <rect x="9" y="21" width="12" height="8" rx="1" fill="#1a8ad4" />
      </svg>
      <Chrome cls="ml-[24px] w-[30px] h-[30px] shrink-0" />
      <div className="ml-[26px] relative shrink-0">
        <FaWhatsapp className="w-[31px] h-[31px] text-[#128c4e]" />
        <div className="absolute left-[12px] top-[36px] w-[6px] h-[6px] rounded-full bg-[#777]" />
      </div>
      <div className="ml-[24px] relative shrink-0">
        <Chrome cls="w-[30px] h-[30px]" />
        <div className="absolute left-[16px] -top-[6px] w-[20px] h-[24px] rounded-full bg-[#5d4a63]" />
        <div className="absolute left-[12px] top-[35px] w-[6px] h-[6px] rounded-full bg-[#777]" />
      </div>
      <div className="ml-[16px] w-[48px] h-[48px] rounded bg-[#f5efea] relative shrink-0">
        <svg viewBox="0 0 30 30" className="absolute left-[9px] top-[8px] w-[30px] h-[30px]">
          <rect x="0" y="0" width="30" height="30" fill="#0f7fd8" />
          <rect x="17" y="0" width="12" height="30" fill="#e0a312" />
          <rect x="9" y="10" width="11" height="20" fill="#f2c811" />
          <rect x="3" y="19" width="11" height="11" fill="#f7dc6a" />
        </svg>
        <div className="absolute left-[14px] bottom-0 w-[20px] h-[4px] rounded-full bg-[#0f7fd8]" />
      </div>
      <div className="flex-1 flex items-center justify-end pr-[26px]">
        <ChevronUp className="w-[20px] h-[20px] mr-[26px]" strokeWidth={2} />
        <div className="text-[14px] leading-[20px] text-center mr-[22px]">
          <div>ENG</div>
          <div>IN</div>
        </div>
        <svg viewBox="0 0 20 18" className="w-[20px] h-[18px] mr-[9px]" fill="none" stroke="#222" strokeWidth="1.5">
          <path d="M1 6c5-5 13-5 18 0M4 9c4-3 8-3 12 0M7 12c2-1 4-1 6 0" />
          <circle cx="10" cy="15.5" r="1.2" fill="#222" />
        </svg>
        <svg viewBox="0 0 22 18" className="w-[22px] h-[18px] mr-[9px]" fill="none" stroke="#333" strokeWidth="1.4">
          <path d="M2 6h4l5-4v14l-5-4H2z" /><path d="M14 5c2 2 2 6 0 8" /><path d="M17 3c3 3 3 9 0 12" stroke="#aaa" />
        </svg>
        <svg viewBox="0 0 22 14" className="w-[22px] h-[14px] mr-[18px]" fill="none" stroke="#222" strokeWidth="1.4">
          <rect x="1" y="1" width="17" height="12" rx="2" />
          <rect x="3.5" y="3.5" width="12" height="7" fill="#222" stroke="none" />
          <path d="M20 5v4" />
        </svg>
        <div className="text-[14.5px] leading-[23px] text-right">
          <div>14:04</div>
          <div>09-08-2025</div>
        </div>
      </div>
    </div>
  );
}

export default function App() {
  return (
    <div className="w-[1920px] h-[1080px] overflow-hidden flex flex-col font-['Open_Sans',sans-serif] bg-white">
      {/* title bar */}
      <div className="h-[43px] shrink-0 bg-[#3b3a39] flex items-center text-white text-[14px]">
        <div className="w-[796px] shrink-0 flex items-center pl-[21px]">
          <svg viewBox="0 0 20 20" className="w-5 h-5" fill="none" stroke="#eee" strokeWidth="1.3">
            <path d="M1 1h15l3 3v15H1zM6 1v6h8V1M5 19v-8h10v8" />
          </svg>
          <svg viewBox="0 0 20 20" className="w-5 h-5 ml-[17px]" fill="none" stroke="#8a8886" strokeWidth="1.3">
            <path d="M2 6h10c7 0 7 9 1 10l-2 2M2 6l4-4M2 6l4 4" />
          </svg>
          <svg viewBox="0 0 20 20" className="w-5 h-5 ml-[16px]" fill="none" stroke="#8a8886" strokeWidth="1.3">
            <path d="M18 6H8c-7 0-7 9-1 10l2 2M18 6l-4-4M18 6l-4 4" />
          </svg>
          <span className="ml-[12px] whitespace-nowrap">customer churn analyst&nbsp;•&nbsp;<span className="tracking-[0.2px]">Last saved: Today at 11:36 AM</span></span>
          <span className="ml-[9px] w-0 h-0 border-x-[5px] border-x-transparent border-t-[5px] border-t-white" />
        </div>
        <div className="w-[500px] h-[30px] shrink-0 bg-[#d2d0ce] rounded-sm flex items-center pl-[21px] gap-[15px] text-[16px] text-[#4a5f58]">
          <Search className="w-[21px] h-[21px] -scale-x-100 text-[#333]" strokeWidth={1.4} />
          Search
        </div>
        <div className="flex-1 flex items-center justify-end">
          <span className="text-[14px] whitespace-nowrap">AYISHA RTC2022BIT043</span>
          <svg viewBox="0 0 26 26" className="w-[26px] h-[26px] ml-[12px]">
            <circle cx="13" cy="13" r="13" fill="#fff" />
            <circle cx="13" cy="8.5" r="3.5" fill="none" stroke="#333" strokeWidth="1.5" />
            <path d="M6 20c0-7 14-7 14 0 0 2-14 2-14 0z" fill="none" stroke="#333" strokeWidth="1.5" />
          </svg>
          <Minus className="w-[16px] h-[16px] ml-[39px]" strokeWidth={1.5} />
          <Square className="w-[14px] h-[14px] ml-[39px]" strokeWidth={1.6} />
          <X className="w-[18px] h-[18px] ml-[39px] mr-[18px]" strokeWidth={1.6} />
        </div>
      </div>

      <Ribbon />

      <div className="h-[746px] shrink-0 flex">
        <Rail />
        <div className="w-[1560px] shrink-0 bg-[#999999] overflow-hidden">
          <Report />
        </div>
        <Panes />
      </div>

      {/* page tabs */}
      <div className="h-[44px] shrink-0 bg-[#f3f2f1] flex">
        <div className="w-[51px] shrink-0 border-r border-[#e1dfdd]" />
        <div className="w-[160px] shrink-0 relative border-r border-[#c8c6c4]">
          <svg viewBox="0 0 26 20" className="absolute left-[14px] top-[9px] w-[26px] h-[20px]" fill="none" stroke="#605e5c" strokeWidth="1.4">
            <path d="M1 1h24v14H1zM13 15v4M8 19h10" />
          </svg>
          <div className="absolute left-[13px] top-[35px] w-[30px] h-[3px] rounded bg-[#117865]" />
          <svg viewBox="0 0 16 24" className="absolute left-[74px] top-[6px] w-[16px] h-[24px]" fill="none" stroke="#605e5c" strokeWidth="1.4">
            <rect x="1" y="1" width="14" height="22" rx="1.5" /><circle cx="8" cy="19.5" r="0.6" fill="#605e5c" />
          </svg>
          <div className="absolute left-[116px] top-[16px] w-0 h-0 border-y-[5px] border-y-transparent border-r-[6px] border-r-[#c8c6c4]" />
          <div className="absolute left-[145px] top-[16px] w-0 h-0 border-y-[5px] border-y-transparent border-l-[6px] border-l-[#c8c6c4]" />
        </div>
        <div className="w-[94px] shrink-0 bg-white border-b-[5px] border-[#117865] flex items-center justify-center text-[14px] font-semibold text-[#252423] pt-[3px]">Page 1</div>
        <div className="w-[49px] shrink-0 bg-[#117865] flex items-center justify-center text-white text-[24px] font-bold leading-none">+</div>
        <div className="w-[1298px] shrink-0 border-r border-[#e1dfdd]" />
        <div className="w-[43px] shrink-0 border-r border-[#e1dfdd]" />
      </div>

      {/* status bar */}
      <div className="h-[29px] shrink-0 bg-[#f3f2f1] border-t-2 border-[#e6e4e2] flex items-center text-[14px] text-[#484644]">
        <span className="pl-[5px] w-[1654px]">Page 1 of 1</span>
        <span className="w-[5px] h-[2px] bg-[#555]" />
        <div className="ml-[5px] w-[124px] h-[2px] bg-[#605e5c] relative">
          <div className="absolute left-[49px] -top-[6px] w-[4px] h-[14px] bg-[#555]" />
          <div className="absolute left-[61px] -top-[3px] w-px h-[8px] bg-[#555]" />
        </div>
        <span className="ml-[11px] text-[16px] leading-none">+</span>
        <span className="ml-[18px] text-[14px]">82%</span>
        <div className="ml-[24px] w-[20px] h-[20px] bg-[#d8e4ec] border border-[#8a9aa5] flex items-center justify-center">
          <div className="w-[12px] h-[12px] border border-dashed border-[#555] bg-white" />
        </div>
      </div>

      <TaskBar />
    </div>
  );
}
